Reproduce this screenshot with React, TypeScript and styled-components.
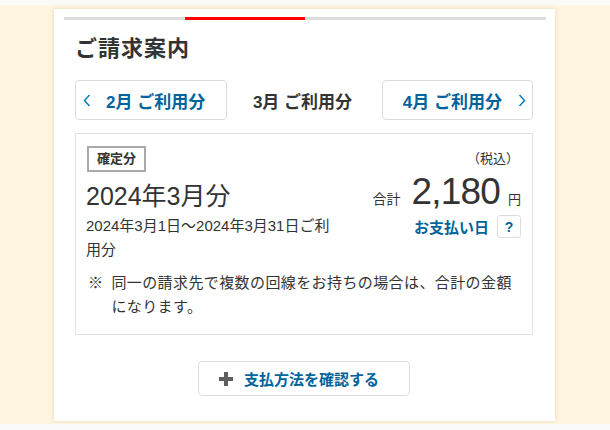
import styled, { createGlobalStyle } from 'styled-components';

const GlobalStyle = createGlobalStyle`
  html, body {
    margin: 0;
    padding: 0;
    background: #fafafa;
    font-family: "Liberation Sans", "Noto Sans CJK JP", sans-serif;
    color: #333333;
  }
`;

const Backdrop = styled.main`
  margin-top: 5px;
  height: 419px;
  padding: 4px 0 0 54px;
  box-sizing: border-box;
  background: #fff5e0;
`;

const Card = styled.section`
  width: 501px;
  height: 412px;
  box-sizing: border-box;
  padding: 8px 9px 0 10px;
  background: #ffffff;
  box-shadow: 0 0 4px rgba(180, 160, 120, 0.35);
`;

const Progress = styled.div`
  display: grid;
  grid-template-columns: repeat(4, 1fr);
  height: 3px;
  background: #dddddd;
`;

const Step = styled.div<{ $active?: boolean }>`
  background: ${p => (p.$active ? '#ff0000' : 'transparent')};
`;

const Body = styled.div`
  padding: 0 13px 0 11px;
`;

const Title = styled.h2`
  margin: 13px 0 0;
  font-size: 22px;
  font-weight: 700;
  letter-spacing: 1px;
  line-height: 32px;
  color: #333333;
`;

const Tabs = styled.nav`
  display: grid;
  grid-template-columns: 152px 1fr 151px;
  align-items: center;
  margin-top: 15px;
  height: 40px;
`;

const TabButton = styled.button<{ $side: 'left' | 'right' }>`
  display: flex;
  align-items: center;
  justify-content: ${p => (p.$side === 'left' ? 'flex-start' : 'flex-end')};
  gap: ${p => (p.$side === 'left' ? 15 : 16)}px;
  height: 40px;
  padding: ${p => (p.$side === 'left' ? '0 0 0 7px' : '0 6px 0 0')};
  background: #ffffff;
  border: 1px solid #dddddd;
  border-radius: 4px;
  font-family: inherit;
  font-size: 17px;
  font-weight: 700;
  color: #00649c;
  cursor: pointer;
`;

const Current = styled.span`
  text-align: center;
  font-size: 17px;
  font-weight: 700;
  color: #333333;
  padding-right: 4px;
`;

const Chevron = ({ dir }: { dir: 'left' | 'right' }) => (
  <svg width="8" height="13" viewBox="0 0 8 13" fill="none" stroke="#0079b5" strokeWidth="1.4">
    {dir === 'left' ? <path d="M6.5 1 L1.5 6.5 L6.5 12" /> : <path d="M1.5 1 L6.5 6.5 L1.5 12" />}
  </svg>
);

const Bill = styled.div`
  margin-top: 13px;
  height: 202px;
  box-sizing: border-box;
  border: 1px solid #e2e2e2;
  padding: 12px 11px 0 10px;
`;

const BillTop = styled.div`
  display: flex;
  justify-content: space-between;
`;

const LeftCol = styled.div`
  width: 256px;
`;

const Badge = styled.span`
  display: inline-block;
  margin-left: 1px;
  padding: 0 8px;
  height: 22px;
  line-height: 22px;
  border: 2px solid #aaaaaa;
  font-size: 13px;
  font-weight: 700;
  color: #333333;
`;

const Month = styled.div`
  margin-top: 7px;
  font-size: 25px;
  line-height: 34px;
  color: #333333;
`;

const Period = styled.div`
  margin-top: 1px;
  font-size: 15px;
  line-height: 24px;
  color: #333333;
`;

const RightCol = styled.div`
  display: flex;
  flex-direction: column;
  align-items: flex-end;
  padding-top: 3px;
`;

const Tax = styled.div`
  font-size: 13px;
  line-height: 20px;
  margin-right: 2px;
`;

const Total = styled.div`
  display: flex;
  align-items: baseline;
  height: 42px;
  margin-top: 2px;
`;

const Small = styled.span<{ $size: number }>`
  font-size: ${p => p.$size}px;
`;

const Amount = styled.span`
  font-size: 37px;
  letter-spacing: -0.8px;
  margin: 0 8px 0 11px;
  color: #333333;
`;

const PayRow = styled.div`
  display: flex;
  align-items: center;
  gap: 8px;
  margin-top: 2px;
`;

const PayLabel = styled.span`
  font-size: 15px;
  font-weight: 700;
  color: #00649c;
`;

const HelpButton = styled.button`
  width: 24px;
  height: 23px;
  padding: 0;
  background: #ffffff;
  border: 1px solid #dddddd;
  border-radius: 3px;
  font-family: "Liberation Sans", sans-serif;
  font-size: 14px;
  font-weight: 700;
  color: #00649c;
`;

const Note = styled.p`
  display: flex;
  gap: 8px;
  margin: 9px 0 0 2px;
  padding-right: 8px;
  font-size: 15px;
  letter-spacing: 0.4px;
  line-height: 24px;
  color: #333333;
`;

const Actions = styled.div`
  display: flex;
  justify-content: center;
  margin-top: 26px;
`;

const ActionButton = styled.button`
  display: flex;
  align-items: center;
  justify-content: center;
  gap: 11px;
  width: 212px;
  height: 35px;
  padding-right: 16px;
  background: #ffffff;
  border: 1px solid #dddddd;
  border-radius: 4px;
  font-family: inherit;
  font-size: 15px;
  font-weight: 700;
  color: #00649c;
  cursor: pointer;
`;

const PlusIcon = () => (
  <svg width="14" height="14" viewBox="0 0 14 14">
    <path d="M5 0h4v5h5v4H9v5H5V9H0V5h5z" fill="#5f5f5f" />
  </svg>
);

const App = () => {
  return (
    <>
      <GlobalStyle />
      <Backdrop>
        <Card>
          <Progress>
            <Step />
            <Step $active />
            <Step />
            <Step />
          </Progress>
          <Body>
            <Title>ご請求案内</Title>
            <Tabs>
              <TabButton $side="left">
                <Chevron dir="left" />
                <span>2月 ご利用分</span>
              </TabButton>
              <Current>3月 ご利用分</Current>
              <TabButton $side="right">
                <span>4月 ご利用分</span>
                <Chevron dir="right" />
              </TabButton>
            </Tabs>
            <Bill>
              <BillTop>
                <LeftCol>
                  <Badge>確定分</Badge>
                  <Month>2024年3月分</Month>
                  <Period>2024年3月1日～2024年3月31日ご利用分</Period>
                </LeftCol>
                <RightCol>
                  <Tax>（税込）</Tax>
                  <Total>
                    <Small $size={14}>合計</Small>
                    <Amount>2,180</Amount>
                    <Small $size={13}>円</Small>
                  </Total>
                  <PayRow>
                    <PayLabel>お支払い日</PayLabel>
                    <HelpButton>?</HelpButton>
                  </PayRow>
                </RightCol>
              </BillTop>
              <Note>
                <span>※</span>
                <span>同一の請求先で複数の回線をお持ちの場合は、合計の金額になります。</span>
              </Note>
            </Bill>
            <Actions>
              <ActionButton>
                <PlusIcon />
                <span>支払方法を確認する</span>
              </ActionButton>
            </Actions>
          </Body>
        </Card>
      </Backdrop>
    </>
  );
};

export default App;
